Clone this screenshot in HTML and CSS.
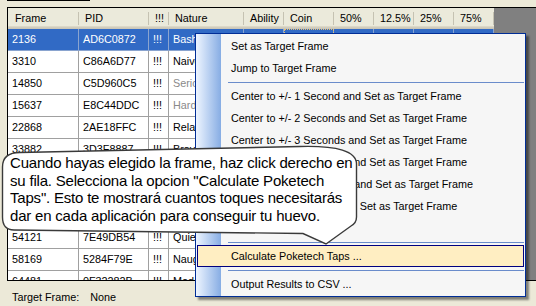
FILE: index.html
```html
<!DOCTYPE html>
<html lang="en">
<head>
    <meta charset="UTF-8">
    <title>Frame Results</title>
    <link rel="stylesheet" href="styles.css">
</head>
<body>
    <div class="tabline"></div>

    <!-- Results grid -->
    <div class="grid">
        <div class="row head">
            <div class="cell first">Frame</div>
            <div class="cell">PID</div>
            <div class="cell">!!!</div>
            <div class="cell">Nature</div>
            <div class="cell">Ability</div>
            <div class="cell">Coin</div>
            <div class="cell">50%</div>
            <div class="cell">12.5%</div>
            <div class="cell">25%</div>
            <div class="cell">75%</div>
        </div>
        <div class="row selected">
            <div class="cell">2136</div><div class="cell">AD6C0872</div><div class="cell">!!!</div><div class="cell">Bashful</div>
            <div class="cell">0</div><div class="cell focus">Heads</div><div class="cell">F</div><div class="cell">F</div><div class="cell">F</div><div class="cell">F</div>
        </div>
        <div class="row">
            <div class="cell">3310</div><div class="cell">C86A6D77</div><div class="cell">!!!</div><div class="cell">Naive</div>
            <div class="cell">1</div><div class="cell">Tails</div><div class="cell">M</div><div class="cell">M</div><div class="cell">M</div><div class="cell">F</div>
        </div>
        <div class="row">
            <div class="cell">14850</div><div class="cell">C5D960C5</div><div class="cell">!!!</div><div class="cell neutral">Serious</div>
            <div class="cell">1</div><div class="cell">Heads</div><div class="cell">M</div><div class="cell">M</div><div class="cell">M</div><div class="cell">M</div>
        </div>
        <div class="row">
            <div class="cell">15637</div><div class="cell">E8C44DDC</div><div class="cell">!!!</div><div class="cell neutral">Hardy</div>
            <div class="cell">0</div><div class="cell">Tails</div><div class="cell">M</div><div class="cell">M</div><div class="cell">M</div><div class="cell">M</div>
        </div>
        <div class="row">
            <div class="cell">22868</div><div class="cell">2AE18FFC</div><div class="cell">!!!</div><div class="cell">Relaxed</div>
            <div class="cell">0</div><div class="cell">Heads</div><div class="cell">M</div><div class="cell">M</div><div class="cell">M</div><div class="cell">M</div>
        </div>
        <div class="row">
            <div class="cell">33882</div><div class="cell">3D3F8887</div><div class="cell">!!!</div><div class="cell">Brave</div>
            <div class="cell">1</div><div class="cell">Tails</div><div class="cell">M</div><div class="cell">M</div><div class="cell">M</div><div class="cell">M</div>
        </div>
        <div class="row">
            <div class="cell">38417</div><div class="cell">91B2C4E0</div><div class="cell">!!!</div><div class="cell">Lonely</div>
            <div class="cell">0</div><div class="cell">Heads</div><div class="cell">M</div><div class="cell">M</div><div class="cell">M</div><div class="cell">F</div>
        </div>
        <div class="row">
            <div class="cell">41290</div><div class="cell">6F0A3B52</div><div class="cell">!!!</div><div class="cell">Timid</div>
            <div class="cell">1</div><div class="cell">Heads</div><div class="cell">M</div><div class="cell">F</div><div class="cell">M</div><div class="cell">M</div>
        </div>
        <div class="row">
            <div class="cell">47755</div><div class="cell">B3E8127D</div><div class="cell">!!!</div><div class="cell">Calm</div>
            <div class="cell">0</div><div class="cell">Tails</div><div class="cell">M</div><div class="cell">M</div><div class="cell">M</div><div class="cell">M</div>
        </div>
        <div class="row">
            <div class="cell">54121</div><div class="cell">7E49DB54</div><div class="cell">!!!</div><div class="cell">Quiet</div>
            <div class="cell">0</div><div class="cell">Heads</div><div class="cell">M</div><div class="cell">M</div><div class="cell">M</div><div class="cell">M</div>
        </div>
        <div class="row">
            <div class="cell">58169</div><div class="cell">5284F79E</div><div class="cell">!!!</div><div class="cell">Naughty</div>
            <div class="cell">0</div><div class="cell">Tails</div><div class="cell">M</div><div class="cell">M</div><div class="cell">M</div><div class="cell">M</div>
        </div>
        <div class="row">
            <div class="cell">64481</div><div class="cell">0F32282B</div><div class="cell">!!!</div><div class="cell">Modest</div>
            <div class="cell">1</div><div class="cell">Heads</div><div class="cell">M</div><div class="cell">M</div><div class="cell">M</div><div class="cell">M</div>
        </div>
    </div>

    <div class="status">
        <span class="status-label">Target Frame:</span>
        <span>None</span>
    </div>

    <!-- Context menu -->
    <div class="menu">
        <div class="item">Set as Target Frame</div>
        <div class="item">Jump to Target Frame</div>
        <div class="sep"></div>
        <div class="item">Center to +/- 1 Second and Set as Target Frame</div>
        <div class="item">Center to +/- 2 Seconds and Set as Target Frame</div>
        <div class="item">Center to +/- 3 Seconds and Set as Target Frame</div>
        <div class="item">Center to +/- 5 Seconds and Set as Target Frame</div>
        <div class="item">Center to +/- 10 Seconds and Set as Target Frame</div>
        <div class="item">Center to +/- 1 Minute and Set as Target Frame</div>
        <div class="item">Search Seed Timing</div>
        <div class="sep"></div>
        <div class="item hover">Calculate Poketech Taps ...</div>
        <div class="sep"></div>
        <div class="item">Output Results to CSV ...</div>
    </div>

    <!-- Speech bubble -->
    <div class="bubble">
        <svg class="bubble-shape" width="370" height="110" viewBox="0 0 370 110">
            <path d="M2.5 27 Q2.5 12.5 20 12.5 L300 6.5 Q356.5 5 356.5 24 L356.5 77 Q356.5 83 351 86 L326 104 L303 93.5 L14 90 Q2.5 90 2.5 77 Z"
                  fill="#fff" stroke="#3a3a3a" stroke-width="1.4"/>
        </svg>
        <p class="bubble-text">Cuando hayas elegido la frame, haz click derecho en<br>su fila. Selecciona la opcion "Calculate Poketech<br>Taps". Esto te mostrará cuantos toques necesitarás<br>dar en cada aplicación para conseguir tu huevo.</p>
    </div>
</body>
</html>
```

FILE: styles.css
```css
* {
    margin: 0;
    padding: 0;
    box-sizing: border-box;
}
body {
    background: #ece9d8;
    font-family: "Liberation Sans", Arial, sans-serif;
    font-size: 10.8px;
    color: #000;
    width: 536px;
    height: 306px;
    overflow: hidden;
}

.tabline {
    margin-left: 7px;
    width: 83px;
    height: 1px;
    background: #000;
}

/* Grid */
.grid {
    margin: 6px 0 0 7px;
    width: 540px;
    height: 274px;
    border: 1px solid #000;
    background: #808080;
    overflow: hidden;
}
.row {
    display: grid;
    grid-template-columns: 71px 70px 20px 75px 40px 50px 40px 40px 40px 40px;
    width: 486px;
    height: 22px;
    background: #fff;
}
.cell {
    height: 22px;
    line-height: 21px;
    padding-left: 4px;
    border-right: 1px solid #a0a0a0;
    border-bottom: 1px solid #a0a0a0;
    white-space: nowrap;
    overflow: hidden;
}
.neutral {
    color: #8a8a8a;
}
.selected {
    background: #316ac5;
    color: #fff;
}
.selected .cell {
    border-color: #8aa4cf;
}
.focus {
    outline: 1px dotted #e8c070;
    outline-offset: -1px;
}

.head {
    height: 21px;
    background: linear-gradient(#ebeadb 0, #ebeadb 18px, #e2decd 18px, #d6d2c2 19px, #cbc7b8 20px);
}
.head .cell {
    height: 21px;
    line-height: 20px;
    padding-left: 6px;
    border: none;
    background: linear-gradient(#c5c2b2, #c5c2b2) right 4px / 1px 13px no-repeat;
}
.head .first {
    padding-left: 7px;
}

/* Status line */
.status {
    display: flex;
    gap: 11px;
    margin: 9px 0 0 12px;
    line-height: 14px;
}

/* Context menu */
.menu {
    position: absolute;
    left: 195px;
    top: 33px;
    width: 331px;
    height: 264px;
    padding: 1px 0;
    border: 1px solid #002d96;
    background: linear-gradient(to right, #eef5ff, #87ade4) 0 0 / 25px 100% no-repeat, #f6f6f6;
    box-shadow: 3px 3px 2px rgba(0, 0, 0, 0.45);
    color: #000;
}
.item {
    height: 22px;
    line-height: 22px;
    padding-left: 35px;
    white-space: nowrap;
    overflow: hidden;
}
.item.hover {
    margin: 0 1px;
    padding-left: 33px;
    line-height: 20px;
    border: 1px solid #000080;
    background: #ffeec2;
}
.sep {
    height: 6px;
    margin: 0 1px 0 32px;
    background: linear-gradient(#6a8ccb, #6a8ccb) 0 3px / 100% 1px no-repeat;
}

/* Speech bubble */
.bubble {
    position: absolute;
    left: 0;
    top: 140px;
    width: 370px;
    height: 110px;
}
.bubble-shape {
    display: block;
}
.bubble-text {
    position: absolute;
    left: 10px;
    top: 14px;
    font-size: 15px;
    letter-spacing: -0.2px;
    line-height: 17.7px;
    color: #000;
    white-space: nowrap;
}
```
